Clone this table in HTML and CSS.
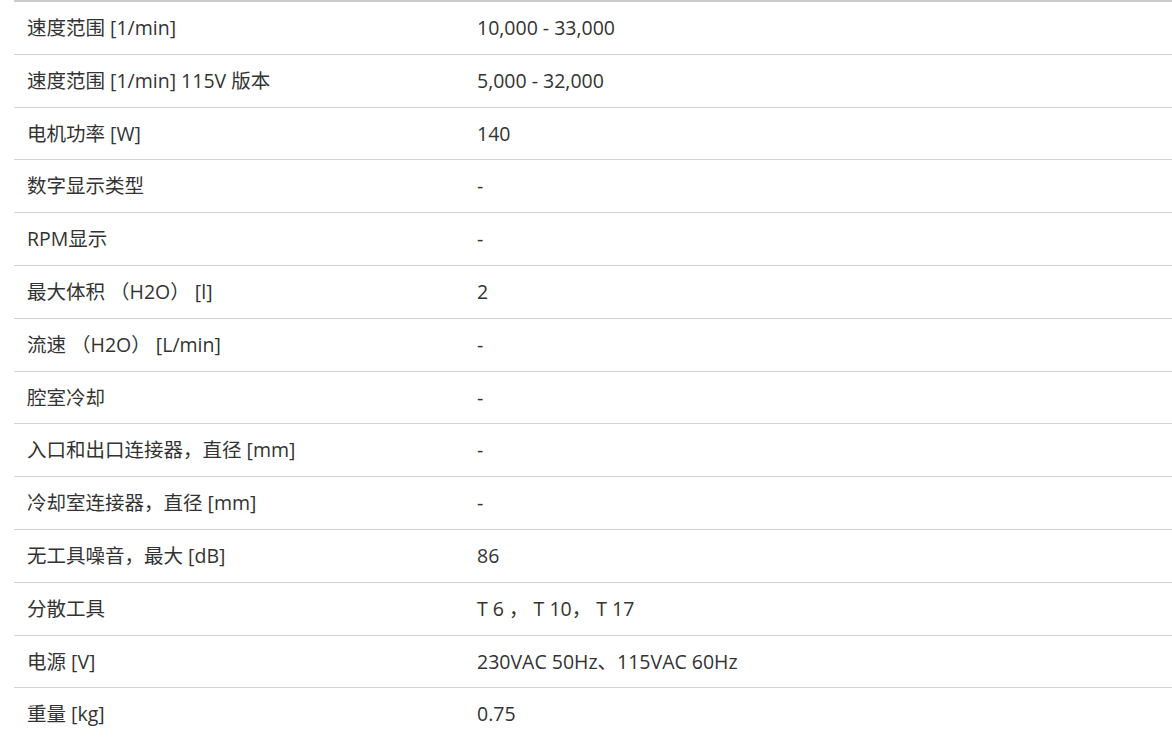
FILE: index.html
```html
<!DOCTYPE html>
<html lang="zh">
<head>
<meta charset="utf-8">
<link rel="stylesheet" href="styles.css">
</head>
<body>
<table class="specs">
<tbody>
<tr><td class="label">速度范围 [1/min]</td><td class="value">10,000 - 33,000</td></tr>
<tr><td class="label">速度范围 [1/min] 115V 版本</td><td class="value">5,000 - 32,000</td></tr>
<tr><td class="label">电机功率 [W]</td><td class="value">140</td></tr>
<tr><td class="label">数字显示类型</td><td class="value">-</td></tr>
<tr><td class="label">RPM显示</td><td class="value">-</td></tr>
<tr><td class="label">最大体积 （H2O） [l]</td><td class="value">2</td></tr>
<tr><td class="label">流速 （H2O） [L/min]</td><td class="value">-</td></tr>
<tr><td class="label">腔室冷却</td><td class="value">-</td></tr>
<tr><td class="label">入口和出口连接器，直径 [mm]</td><td class="value">-</td></tr>
<tr><td class="label">冷却室连接器，直径 [mm]</td><td class="value">-</td></tr>
<tr><td class="label">无工具噪音，最大 [dB]</td><td class="value">86</td></tr>
<tr><td class="label">分散工具</td><td class="value">T 6 ， T 10， T 17</td></tr>
<tr><td class="label">电源 [V]</td><td class="value">230VAC 50Hz、115VAC 60Hz</td></tr>
<tr><td class="label">重量 [kg]</td><td class="value">0.75</td></tr>
</tbody>
</table>
</body>
</html>
```

FILE: styles.css
```css
html, body {
  margin: 0;
  padding: 0;
  background: #ffffff;
}
body {
  padding-left: 14px;
  font-family: "Open Sans", "Noto Sans CJK SC", sans-serif;
  font-size: 19.5px;
  color: #333333;
  overflow: hidden;
}
.specs {
  width: 1158px;
  border-collapse: collapse;
  border-top: 2px solid #cccccc;
}
.specs td {
  padding: 13px 13px;
  line-height: 25.8px;
  border-bottom: 1px solid #d2d2d2;
  vertical-align: middle;
  text-align: left;
}
.specs .label {
  width: 424px;
}
```
